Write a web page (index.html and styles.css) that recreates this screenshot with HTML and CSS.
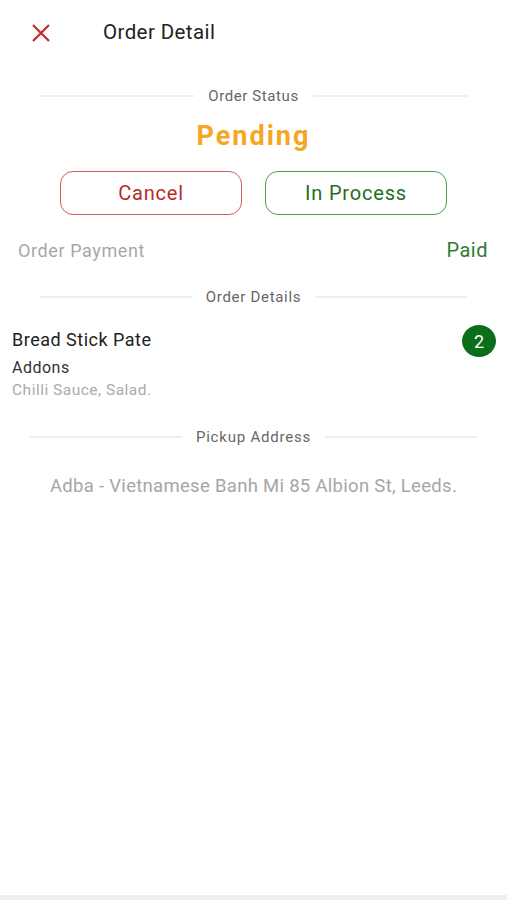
FILE: index.html
```html
<!DOCTYPE html>
<html>
<head>
<meta charset="utf-8">
<link rel="stylesheet" href="styles.css">
</head>
<body>
<div class="screen">
  <header class="header">
    <svg class="close" width="20" height="18" viewBox="0 0 20 18"><path d="M2 1 L18 17 M18 1 L2 17" stroke="#c62828" stroke-width="2.2" fill="none"/></svg>
    <span class="title">Order Detail</span>
  </header>

  <div class="divider d1"><span class="line"></span><span class="dtext">Order Status</span><span class="line"></span></div>
  <div class="status">Pending</div>
  <div class="buttons">
    <button class="btn cancel">Cancel</button>
    <button class="btn process">In Process</button>
  </div>
  <div class="payment"><span class="plabel">Order Payment</span><span class="pvalue">Paid</span></div>

  <div class="divider d2"><span class="line"></span><span class="dtext">Order Details</span><span class="line"></span></div>
  <div class="item">
    <div class="item-row"><span class="item-name">Bread Stick Pate</span><span class="badge">2</span></div>
    <div class="addons">Addons</div>
    <div class="addon-list">Chilli Sauce, Salad.</div>
  </div>

  <div class="divider d3"><span class="line"></span><span class="dtext">Pickup Address</span><span class="line"></span></div>
  <div class="address">Adba - Vietnamese Banh Mi 85 Albion St, Leeds.</div>
  <div class="spacer"></div>
  <div class="bottom-bar"></div>
</div>
</body>
</html>
```

FILE: styles.css
```css
* { box-sizing: border-box; }
html, body { margin: 0; padding: 0; background: #fff; }
body { font-family: Roboto, "Noto Sans", sans-serif; }
.screen { width: 507px; height: 900px; display: flex; flex-direction: column; }
.header { height: 64px; display: flex; align-items: center; padding-left: 31px; }
.close { display: block; margin-top: 1px; }
.title { margin-left: 52px; font-size: 20.5px; letter-spacing: 0.4px; color: #222; }
.divider { display: flex; align-items: center; margin: 0 40px; height: 20px; }
.divider .line { flex: 1; height: 2px; background: #eeeeee; }
.dtext { padding: 0 14px; font-size: 15px; letter-spacing: 0.6px; color: #666; }
.d1 { margin-top: 22px; }
.status { margin-top: 10px; text-align: center; font-size: 27px; letter-spacing: 2px; font-weight: 700; color: #f5a623; height: 40px; line-height: 40px; }
.buttons { display: flex; justify-content: center; gap: 23px; margin-top: 15px; }
.btn { width: 182px; height: 44px; border-radius: 13px; background: #fff; font-family: Roboto, sans-serif; font-size: 20px; letter-spacing: 0.8px; }
.cancel { border: 1.6px solid #d06060; color: #b72b2b; }
.process { border: 1.6px solid #4a9a4e; color: #1f6e25; }
.payment { display: flex; justify-content: space-between; align-items: center; padding: 0 19px 0 18px; margin-top: 22px; height: 26px; }
.plabel { font-size: 18px; letter-spacing: 0.6px; color: #a8a8a8; }
.pvalue { font-size: 20px; letter-spacing: 0.5px; color: #2e7d32; }
.d2 { margin-top: 24px; }
.d2 .dtext { letter-spacing: 0.7px; }
.item { padding: 0 11px 0 12px; margin-top: 16px; }
.item-row { display: flex; justify-content: space-between; align-items: center; height: 36px; }
.item-name { font-size: 18px; letter-spacing: 0.5px; color: #222; margin-top: -3px; }
.badge { width: 34px; height: 32px; border-radius: 50%; background: #0b6e1b; color: #fff; font-size: 18px; display: flex; align-items: center; justify-content: center; }
.addons { font-size: 16px; letter-spacing: 0.5px; color: #333; margin-top: -1px; line-height: 20px; }
.addon-list { font-size: 15.5px; letter-spacing: 0.5px; color: #aaa; margin-top: 2px; line-height: 20px; }
.d3 { margin: 27px 30px 0; }
.d3 .dtext { letter-spacing: 0.8px; }
.address { margin-top: 28px; text-align: center; font-size: 18.5px; letter-spacing: 0.3px; color: #a6a6a6; line-height: 22px; }
.spacer { flex: 1; }
.bottom-bar { height: 5px; background: #efefef; }
```
